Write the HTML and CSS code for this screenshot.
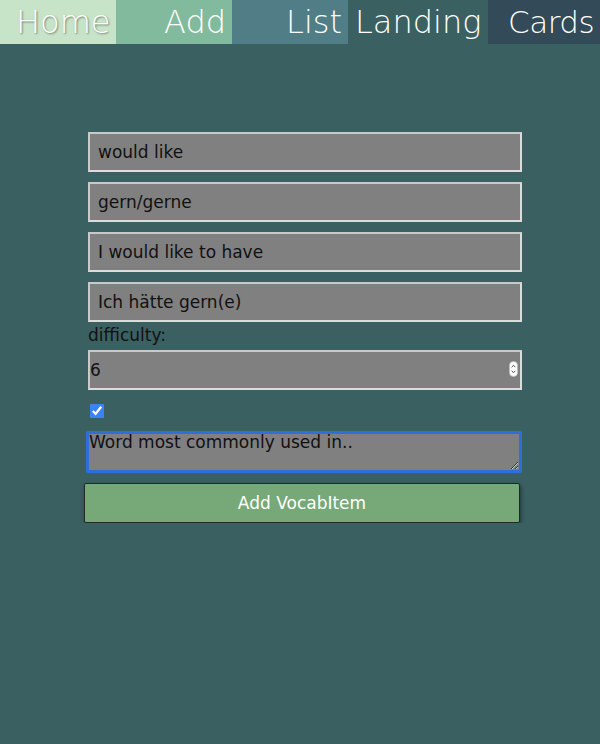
FILE: index.html
```html
<!DOCTYPE html>
<html>
<head>
<meta charset="utf-8">
<link rel="stylesheet" href="styles.css">
</head>
<body>
<nav class="nav">
  <a class="tab tab-home">Home</a>
  <a class="tab tab-add">Add</a>
  <a class="tab tab-list">List</a>
  <a class="tab tab-landing">Landing</a>
  <a class="tab tab-cards">Cards</a>
</nav>
<form class="form">
  <input class="field" type="text" value="would like">
  <input class="field" type="text" value="gern/gerne">
  <input class="field" type="text" value="I would like to have">
  <input class="field" type="text" value="Ich hätte gern(e)">
  <label class="label">difficulty:</label>
  <div class="num-wrap">
    <input class="field num" type="number" value="6">
    <span class="spin">
      <svg width="9" height="16" viewBox="0 0 9 16"><rect x="0.5" y="0.5" width="8" height="15" rx="4" fill="#fff" stroke="#bbb" stroke-width="0.6"/><path d="M2.6 6.2 L4.5 4.3 L6.4 6.2 M2.6 9.8 L4.5 11.7 L6.4 9.8" fill="none" stroke="#444" stroke-width="1"/></svg>
    </span>
  </div>
  <div class="check-row"><input class="check" type="checkbox" checked></div>
  <textarea class="notes">Word most commonly used in..</textarea>
  <button class="submit" type="button">Add VocabItem</button>
</form>
</body>
</html>
```
FILE: styles.css
```css
html, body {
  margin: 0;
  padding: 0;
  background: #3b6062;
  font-family: "DejaVu Sans", sans-serif;
}
.nav {
  display: flex;
  height: 44px;
}
.tab {
  box-sizing: border-box;
  height: 44px;
  font-size: 32px;
  font-weight: 200;
  line-height: 44px;
  color: #ffffff;
  white-space: nowrap;
  overflow: hidden;
}
.tab-home {
  width: 116px;
  background: #c8e4c8;
  padding-left: 16px;
  text-shadow: 1px 1px 2px rgba(0,0,0,0.45);
}
.tab-add {
  width: 116px;
  background: #82ba9d;
  text-align: right;
  padding-right: 6px;
}
.tab-list {
  width: 116px;
  background: #517e86;
  text-align: right;
  padding-right: 6px;
}
.tab-landing {
  width: 140px;
  background: #3b6062;
  padding-left: 7px;
}
.tab-cards {
  width: 112px;
  background: #334a58;
  padding-left: 20px;
  font-size: 31px;
  letter-spacing: -0.5px;
}
.form {
  display: flex;
  flex-direction: column;
  align-items: flex-start;
  margin: 88px 0 0 88px;
  width: 434px;
}
.field {
  box-sizing: border-box;
  width: 434px;
  height: 40px;
  margin: 0 0 10px 0;
  background: #808080;
  border: 2px solid #dcdcdc;
  border-top-color: #c9c9c9;
  border-left-color: #c9c9c9;
  padding: 0 0 0 8px;
  font-family: "DejaVu Sans", sans-serif;
  font-size: 17px;
  color: #111;
  outline: none;
}
.label {
  font-size: 17px;
  color: #111;
  line-height: 20px;
  margin: -7px 0 5px 0;
}
.num-wrap {
  position: relative;
  width: 434px;
}
.num {
  padding-left: 0;
  margin-bottom: 0;
}
.num::-webkit-inner-spin-button,
.num::-webkit-outer-spin-button {
  -webkit-appearance: none;
  margin: 0;
}
.spin {
  position: absolute;
  right: 4px;
  top: 11px;
  width: 9px;
  height: 16px;
}
.spin svg { display: block; }
.check-row {
  height: 42px;
  display: flex;
  align-items: center;
}
.check {
  margin: 0 0 0 2px;
  width: 14px;
  height: 14px;
  accent-color: #3b82f6;
}
.notes {
  box-sizing: border-box;
  width: 436px;
  height: 42px;
  margin: -1px 0 10px -2px;
  padding: 0;
  background: #808080;
  border: 3px solid #2f6fdc;
  border-radius: 2px;
  font-family: "DejaVu Sans", sans-serif;
  font-size: 17px;
  line-height: 16px;
  color: #111;
  outline: none;
  resize: vertical;
}
.submit {
  box-sizing: border-box;
  width: 436px;
  height: 40px;
  margin-left: -4px;
  background: #76a878;
  border: 1px solid #1d2b28;
  border-radius: 2px;
  box-shadow: 1px 2px 4px rgba(0,0,0,0.45);
  font-family: "DejaVu Sans", sans-serif;
  font-size: 17px;
  color: #ffffff;
}
```
